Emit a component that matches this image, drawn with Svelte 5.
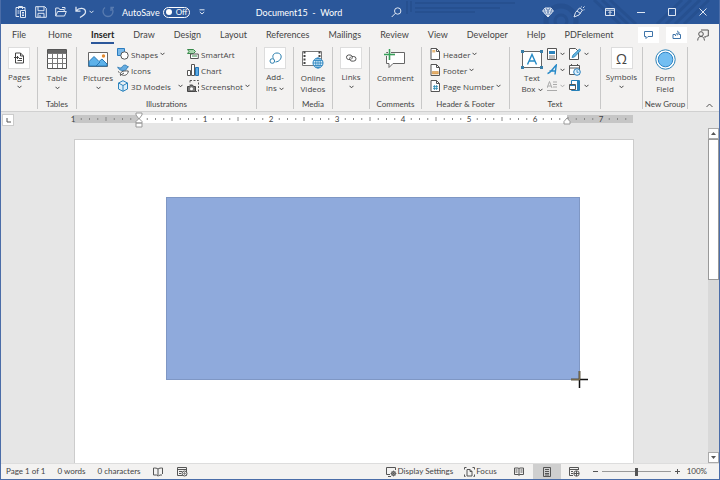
<script>
	let autosave = $state(false);
	let zoom = $state(50);
	let activeTab = $state('Insert');

	const tabs = ['File', 'Home', 'Insert', 'Draw', 'Design', 'Layout', 'References', 'Mailings', 'Review', 'View', 'Developer', 'Help', 'PDFelement'];

	// ruler: 66px per inch, eight marks per inch
	const inch = 66;
	const origin = 66;
	const marks = [];
	for (let i = -7; i < 60; i++) {
		if (i % 8 !== 0) marks.push({ x: origin + (i * inch) / 8, half: i % 4 === 0 });
	}
	const numbers = [1, 2, 3, 4, 5, 6, 7];
</script>

{#snippet chevron()}
	<svg class="chevron" width="5" height="4" viewBox="0 0 5 4"><path d="M.5 .8 2.5 2.8 4.5 .8" /></svg>
{/snippet}

{#snippet docIcon(kind)}
	<svg width="11" height="12" viewBox="0 0 11 12">
		<path d="M1 .5h5.5l3 3v8H1z" fill="#fff" stroke="#555" />
		<path d="M6.5 .5v3h3" fill="none" stroke="#555" />
		{#if kind === 'header'}
			<path d="M2.3 2h3v2.5h-3z" fill="#e8b878" />
		{:else if kind === 'footer'}
			<path d="M2.3 7.5h6v2.5h-6z" fill="#e8b06a" stroke="#c58432" stroke-width=".5" />
		{:else}
			<path d="M3 5.5h5v4H3z" fill="#d6ecf6" />
			<path d="M4.5 5v5M6.5 5v5M3 6.5h5M3 8.5h5" stroke="#2b88b0" stroke-width=".7" />
		{/if}
	</svg>
{/snippet}

<div class="window">
	<header class="titlebar">
		<svg class="pattern" width="330" height="24" viewBox="0 0 330 24" aria-hidden="true">
			<g fill="none" stroke="#234b88" opacity=".55">
				<path d="M18 1v13M22 1v11M26 3h100M26 8h85M26 12h60" stroke-width="2" />
				<circle cx="172" cy="21" r="15" stroke-width="5" />
				<circle cx="172" cy="21" r="6" stroke-width="3" />
				<path d="M205 0l26 24M213 0l26 24M221 0l26 24" stroke-width="3" />
				<path d="M268 24l25-24M277 24l25-24M286 24l25-24M295 24l25-24" stroke-width="3" />
			</g>
		</svg>
		<div class="quick">
			<button aria-label="Paste"><svg width="12" height="12" viewBox="0 0 12 12"><path d="M4 10.5H1v-9h9V4M3.5 3V.5h4V3M5.5 4.5h5v7h-5zM7 6.500h2M7 8h2M7 9.500h2M2.500 5h2M2.500 7h2" /></svg></button>
			<button aria-label="Save"><svg width="12" height="12" viewBox="0 0 12 12"><path d="M.7 .7h9l1.600 1.600v9H.7zM3 .7v4h6v-4M3 11.300v-4h6v4M5 9v2" /></svg></button>
			<button aria-label="Open"><svg width="12" height="12" viewBox="0 0 12 12"><path d="M.7 10V2h3l1 1.500h4.500v2M.7 10l2-4.500h8.600L9.500 10zM7 1.500h3v2" /></svg></button>
			<button class="undo" aria-label="Undo"><svg width="12" height="12" viewBox="0 0 12 12"><path d="M1 .7v4.500h4.500M1.200 5C4 1 10.500 1.500 10.500 6 10.500 8.500 8 9.500 5 11.500" stroke-width="1.300" /></svg>{@render chevron()}</button>
			<button class="faded" aria-label="Redo"><svg width="12" height="12" viewBox="0 0 12 12"><path d="M3 1.500a5 5 0 1 0 6 0M9 5V1.500h3" stroke-width="1.300" /></svg></button>
			<label class="autosave">
				<span>AutoSave</span>
				<span class="switch">
					<input type="checkbox" bind:checked={autosave} />
					<span>{autosave ? 'On' : 'Off'}</span>
				</span>
			</label>
			<button class="customize" aria-label="Customize toolbar"><svg width="6" height="6" viewBox="0 0 6 6"><path d="M.5 .8h5M.8 3l2.200 2L5.200 3" /></svg></button>
		</div>
		<div class="title">Document15&nbsp; -&nbsp; Word</div>
		<button class="search" aria-label="Search"><svg width="11" height="11" viewBox="0 0 11 11"><circle cx="6.700" cy="4" r="3.200" /><path d="M4.400 6.300.7 10" /></svg></button>
		<div class="system">
			<button aria-label="Premium"><svg width="12" height="11" viewBox="0 0 12 11"><path d="M3 1h6l2.300 3L6 10 .7 4zM.7 4h10.600M3 1l1 3 2 6 2-6 1-3M4 4l2-3 2 3M2.300 6h7.400" /></svg></button>
			<button aria-label="Designer"><svg width="12" height="12" viewBox="0 0 12 12"><path d="M1 11l1.500-4.500L6.500 2l3 2-3.500 5zM4 5l3.500 2.500M8 1.500l.5-1M10 2l1.500-1.500M10.500 4l1-.3" /></svg></button>
			<button aria-label="Ribbon display options"><svg width="10" height="8" viewBox="0 0 10 8"><path d="M.5 .5h9v7h-9zM.5 2.200h9M5 7V3.500M3.500 5 5 3.500 6.500 5" /></svg></button>
			<button aria-label="Minimize"><svg width="8" height="8" viewBox="0 0 8 8"><path d="M0 4.500h8" /></svg></button>
			<button aria-label="Maximize"><svg width="8" height="8" viewBox="0 0 8 8"><path d="M.5 .5h7v7h-7z" /></svg></button>
			<button aria-label="Close"><svg width="8" height="8" viewBox="0 0 8 8"><path d="M.5 .5l7 7M7.500 .5l-7 7" /></svg></button>
		</div>
	</header>

	<nav class="tabs">
		{#each tabs as tab}
			<button class:active={tab === activeTab} onclick={() => (activeTab = tab)}>{tab}</button>
		{/each}
		<div class="tab-actions">
			<button class="boxed" aria-label="Comments"><svg width="9" height="8" viewBox="0 0 9 8"><path d="M.5 .5h8v5H4l-2 2v-2H.5z" /></svg></button>
			<button class="boxed" aria-label="Share"><svg width="10" height="9" viewBox="0 0 10 9"><path d="M3 4.500H1v4h7.500v-4H7M3.500 6c0-2 1-3 3-3M5 .8l2.500 2.200L5 5.200" /></svg></button>
			<button class="person" aria-label="Account"><svg width="12" height="12" viewBox="0 0 12 12"><path d="M4 1h7.300v6H9.500L8 8.500V7M.7 11.500C1 8.500 2 7.500 4 7.500s3 1 3.500 4" /><circle cx="4" cy="5" r="2.300" fill="#f3f2f1" /></svg></button>
		</div>
	</nav>

	<section class="ribbon">
		<div class="group pages">
			<button class="large">
				<span class="tile"><svg width="11" height="12" viewBox="0 0 11 12"><path d="M1.500 1h5l3 3v7h-8zM6.500 1v3h3M0 5.500h4.500M3 4l1.500 1.500L3 7M5 6.500h3M3.500 8.500H8" fill="none" stroke="#444" /></svg></span>
				<span>Pages</span>{@render chevron()}
			</button>
		</div>

		<div class="group tables">
			<button class="large">
				<span class="icon"><svg width="20" height="20" viewBox="0 0 20 20"><path d="M.5 .5h19v19H.5z" fill="#fff" stroke="#555" /><path d="M1 1h18v3.500H1z" fill="#666" /><path d="M.5 9.500h19M.5 14.500h19M5.500 4v15M10.500 4v15M15.500 4v15M.5 4.500h19" fill="none" stroke="#777" /></svg></span>
				<span>Table</span>{@render chevron()}
			</button>
			<h2>Tables</h2>
		</div>

		<div class="group illustrations">
			<div class="items">
				<button class="large">
					<span class="icon"><svg width="20" height="15" viewBox="0 0 20 15"><path d="M.5 .5h19v14H.5z" fill="#fff" stroke="#666" /><path d="M1 13V9.500l5-5 5 5 3-2.500 5 5v2H1z" fill="#5db1e9" stroke="#2678b8" /><path d="M8 14l4-4" stroke="#2678b8" /><circle cx="15.500" cy="4" r="1.700" fill="#e48b31" /></svg></span>
					<span>Pictures</span>{@render chevron()}
				</button>
				<div class="stack">
					<button class="small"><svg width="12" height="12" viewBox="0 0 12 12"><path d="M.5 .5h7v7h-7z" fill="#79b8e8" stroke="#2b7cbf" /><circle cx="7.500" cy="7.500" r="3.700" fill="#fff" stroke="#555" /></svg>Shapes {@render chevron()}</button>
					<button class="small"><svg width="12" height="12" viewBox="0 0 12 12"><path d="M5 3.500C5.500.8 9 .3 10 2.200l1.500.6-1.500 1C10 6 8 6.500 6 6.500 3 6.500 1.500 5.500.7 3c1.500 1 3 1.300 4.300.5z" fill="#65ace0" stroke="#2774ae" stroke-width=".8" /><path d="M3.500 11.300C2.500 8 6 6.500 11.300 7c-.3 4-4 5.500-7 3.500M3 11.500 7 9M1 7.500l1.500 1" fill="#fff" stroke="#555" /></svg>Icons</button>
					<button class="small models"><svg width="12" height="12" viewBox="0 0 12 12"><path d="M6 .7 10.500 3v6L6 11.300 1.500 9V3zM1.500 3 6 5.500 10.500 3M6 5.500v5.800" fill="#dceefa" stroke="#2b83bd" /></svg>3D Models <span class="push">{@render chevron()}</span></button>
				</div>
				<div class="stack">
					<button class="small"><svg width="12" height="12" viewBox="0 0 12 12"><path d="M.5 1.500h6l2 2-2 2h-6l1.500-2z" fill="#a7d5ae" stroke="#388a4b" /><path d="M3.500 6h7.800v4.500H3.500z" fill="#fff" stroke="#555" /><path d="M5 8h5" stroke="#388a4b" /></svg>SmartArt</button>
					<button class="small"><svg width="12" height="12" viewBox="0 0 12 12"><path d="M.5 6.500h3v5h-3z" fill="#fff" stroke="#555" /><path d="M4.500 .5h3v11h-3z" fill="#fff" stroke="#555" /><path d="M8.500 3.500h3v8h-3z" fill="#5aace8" stroke="#2474b5" /></svg>Chart</button>
					<button class="small"><svg width="12" height="12" viewBox="0 0 12 12"><path d="M3 .5h8.500v11H8.500M3 .5v4" fill="none" stroke="#555" stroke-dasharray="2 1.500" /><path d="M.5 6.500h2l1-1.500h2l1 1.500h2v5h-8z" fill="#777" stroke="#444" /><circle cx="4.500" cy="8.800" r="1.500" fill="#fff" /></svg>Screenshot {@render chevron()}</button>
				</div>
			</div>
			<h2>Illustrations</h2>
		</div>

		<div class="group addins">
			<button class="large">
				<span class="tile"><svg width="13" height="13" viewBox="0 0 13 13"><path d="M4.500 6.500C3 4.500 4 1 8 1s5 3.500 3.500 6-3 2.500-5 3" fill="none" stroke="#2b7fae" /><circle cx="3.300" cy="9" r="2.300" fill="none" stroke="#2b7fae" /></svg></span>
				<span>Add-<br />ins {@render chevron()}</span>
			</button>
		</div>

		<div class="group media">
			<button class="large">
				<span class="icon"><svg width="22" height="20" viewBox="0 0 22 20"><path d="M.5 2.500h19v14H.5z" fill="#fff" stroke="#777" /><path d="M2.500 2.500v14M17.500 2.500v14" stroke="#444" stroke-width="2" stroke-dasharray="2 1.500" /><circle cx="16" cy="14" r="5" fill="#d8effb" stroke="#2680bd" /><path d="M11 14h10M16 9v10M12 11.500h8M12 16.500h8" stroke="#2680bd" stroke-width=".8" /><ellipse cx="16" cy="14" rx="2.300" ry="5" fill="none" stroke="#2680bd" stroke-width=".8" /></svg></span>
				<span>Online<br />Videos</span>
			</button>
			<h2>Media</h2>
		</div>

		<div class="group links">
			<button class="large">
				<span class="tile"><svg width="12" height="8" viewBox="0 0 12 8"><path d="M5 5.500H3.300A2.300 2.300 0 0 1 3.300 1H5c3 0 3 4 .5 4.500M7 2.500h1.700a2.300 2.300 0 0 1 0 4.600H7c-3 0-3-4-.5-4.500" fill="none" stroke="#555" /></svg></span>
				<span>Links</span>{@render chevron()}
			</button>
		</div>

		<div class="group comments">
			<button class="large">
				<span class="icon"><svg width="22" height="20" viewBox="0 0 22 20"><path d="M2.500 3.500h18v11H9l-4 4v-4H2.500z" fill="#fff" stroke="#666" /><path d="M5.500 0v11M0 5.500h11" stroke="#f3f2f1" stroke-width="3" /><path d="M5.500 0v11M0 5.500h11" stroke="#36a15a" stroke-width="1.500" /></svg></span>
				<span>Comment</span>
			</button>
			<h2>Comments</h2>
		</div>

		<div class="group header-footer">
			<div class="items">
				<div class="stack">
					<button class="small">{@render docIcon('header')}Header {@render chevron()}</button>
					<button class="small">{@render docIcon('footer')}Footer {@render chevron()}</button>
					<button class="small">{@render docIcon('number')}Page Number {@render chevron()}</button>
				</div>
			</div>
			<h2>Header &amp; Footer</h2>
		</div>

		<div class="group text">
			<div class="items">
				<button class="large">
					<span class="icon"><svg width="22" height="19" viewBox="0 0 22 19"><path d="M1.500 1.500h19v16h-19z" fill="#fff" stroke="#666" /><path d="M0 0h3v3H0zM19 0h3v3h-3zM0 16h3v3H0zM19 16h3v3h-3z" fill="#397fa9" /><path d="M6.500 14.500 11 4.500l4.500 10M8 11h6" fill="none" stroke="#268ac5" stroke-width="1.400" /></svg></span>
					<span>Text<br />Box {@render chevron()}</span>
				</button>
				<div class="stack">
					<button class="small only" aria-label="Quick Parts"><svg width="10" height="12" viewBox="0 0 10 12"><path d="M.5 .5h9v11h-9z" fill="#fff" stroke="#555" /><path d="M2 3h6v3H2z" fill="#2b83bd" /><path d="M2 8h6M2 10h6" stroke="#777" /></svg>{@render chevron()}</button>
					<button class="small only" aria-label="WordArt"><svg width="10" height="12" viewBox="0 0 10 12"><path d="M.5 9.500C4 9 6 4 9.300 1L8 10.500M2.500 7h6" fill="none" stroke="#2689c8" stroke-width="1.400" /></svg>{@render chevron()}</button>
					<button class="small only disabled" aria-label="Drop Cap" disabled><svg width="10" height="12" viewBox="0 0 10 12"><path d="M0 8 2.500 1.500 5 8M1 6h3M6 2h4M6 4.500h4M6 7h4M0 10.500h10" fill="none" stroke="#aaa" /></svg>{@render chevron()}</button>
				</div>
				<div class="stack">
					<button class="small only" aria-label="Signature Line"><svg width="12" height="12" viewBox="0 0 12 12"><path d="M.5 .5h6l3 3v8h-9z" fill="#fff" stroke="#555" /><path d="M3 9.500 4 7l6.500-6 1.300 1.300L5.500 9z" fill="#63b4e2" stroke="#287fae" stroke-width=".8" /></svg>{@render chevron()}</button>
					<button class="small only" aria-label="Date and Time"><svg width="12" height="12" viewBox="0 0 12 12"><path d="M.5 1.500h10v9H.5zM.5 4h10M2.500 0v2M8.500 0v2" fill="#fff" stroke="#555" /><circle cx="8" cy="8" r="3.300" fill="#e1f2fc" stroke="#287fbd" /><path d="M8 6v2.300h1.700" fill="none" stroke="#287fbd" stroke-width=".8" /></svg></button>
					<button class="small only" aria-label="Object"><svg width="12" height="12" viewBox="0 0 12 12"><path d="M2.500 .5h8v10h-8z" fill="#fff" stroke="#2680b8" /><path d="M9 1v9" stroke="#2680b8" stroke-width="2" /><path d="M.5 4.500h6v5h-6z" fill="#fff" stroke="#555" /><path d="M1 5.500h5" stroke="#2680b8" /></svg>{@render chevron()}</button>
				</div>
			</div>
			<h2>Text</h2>
		</div>

		<div class="group symbols">
			<button class="large">
				<span class="tile omega">Ω</span>
				<span>Symbols</span>{@render chevron()}
			</button>
		</div>

		<div class="group new-group">
			<button class="large">
				<span class="icon"><svg width="21" height="21" viewBox="0 0 21 21"><circle cx="10.500" cy="10.500" r="9.700" fill="#fff" stroke="#2d83b8" /><circle cx="10.500" cy="10.500" r="7.300" fill="#72bef2" stroke="#2d83c4" /></svg></span>
				<span>Form<br />Field</span>
			</button>
			<h2>New Group</h2>
		</div>
		<button class="collapse" aria-label="Collapse the ribbon"><svg width="7" height="5" viewBox="0 0 7 5"><path d="M.5 4 3.500 1l3 3" /></svg></button>
	</section>

	<div class="editor">
		<div class="ruler-row">
			<button class="tab-stop" aria-label="Left tab"><svg width="5" height="5" viewBox="0 0 5 5"><path d="M1 0v4h4" /></svg></button>
			<svg class="ruler" width="560" height="16" viewBox="0 0 560 16">
				<path d="M0 3h560v8H0z" fill="#c6c6c6" />
				<path d="M66 3h428v8H66z" fill="#fff" />
				{#each marks as mark}
					<path d={mark.half ? `M${mark.x} 5v4` : `M${mark.x} 6v2`} stroke="#888" />
				{/each}
				<text x="0" y="10">1</text>
				{#each numbers as n}
					<text x={origin + n * inch} y="10">{n}</text>
				{/each}
				<path d="M63 1h6v2l-3 4-3-4zM63 11V9.500l3-3 3 3V11zM63 11h6v4h-6z" fill="#fff" stroke="#999" />
				<path d="M491 12V9.500l3-3.500 3 3.500V12z" fill="#fff" stroke="#999" />
			</svg>
		</div>
		<div class="workspace">
			<main class="page">
				<div class="shape">
					<svg class="cursor" width="17" height="17" viewBox="0 0 17 17"><path d="M8.500 0v17M0 8.500h17" stroke="#111" stroke-width="1.500" /><path d="M8.500 0v8.500H0" fill="none" stroke="#766848" stroke-width="1.500" /></svg>
				</div>
			</main>
		</div>
		<div class="scrollbar">
			<button aria-label="Scroll up"><svg width="5" height="3" viewBox="0 0 5 3"><path d="M0 3 2.500 0 5 3z" fill="#555" /></svg></button>
			<div class="track"><div class="thumb"></div></div>
			<button aria-label="Scroll down"><svg width="5" height="3" viewBox="0 0 5 3"><path d="M0 0l2.500 3L5 0z" fill="#555" /></svg></button>
		</div>
	</div>

	<footer class="status">
		<span>Page 1 of 1</span>
		<span>0 words</span>
		<span>0 characters</span>
		<button aria-label="Proofing"><svg width="10" height="10" viewBox="0 0 10 10"><path d="M5 2v7M5 2C4 1 2 1 .5 1v7h3L5 9M5 2c1-1 3-1 4.500-1v6M5.500 9l1.500-1h2" /></svg></button>
		<button class="macro" aria-label="Macro recording"><svg width="11" height="10" viewBox="0 0 11 10"><path d="M.5 .5h9v8h-9zM.5 2.500h9M2 4.500h3M2 6.500h2" /><circle cx="7.500" cy="6.500" r="2.500" fill="#f3f2f1" /><circle cx="7.500" cy="6.500" r=".7" /></svg></button>
		<div class="view-tools">
			<button class="display"><svg width="11" height="10" viewBox="0 0 11 10"><path d="M4 7.500H.5v-7h9V3M2 9.500h3" /><circle cx="7.500" cy="6.500" r="2" /><path d="M7.500 3.500v6M4.500 6.500h6M5.500 4.500l4 4M9.500 4.500l-4 4" stroke-width=".7" /></svg>Display Settings</button>
			<button class="focus"><svg width="11" height="10" viewBox="0 0 11 10"><path d="M3 2.500h3l2 2v4.500H3zM6 2.500v2h2M2.500 .5h-2v2M8.500 .5h2v2M.5 7.500v2h1M10.500 7.500v2h-1" /></svg>Focus</button>
			<button class="view" aria-label="Read mode"><svg width="10" height="9" viewBox="0 0 10 9"><path d="M5 1.500v7M.5 1H4l1 .5L6 1h3.500v6.500H6L5 8l-1-.5H.5zM1.500 3h2M1.500 5h2M6.500 3h2M6.500 5h2" /></svg></button>
			<button class="view selected" aria-label="Print layout"><svg width="8" height="10" viewBox="0 0 8 10"><path d="M.5 .5h7v9h-7zM2 2.500h4M2 4.500h4M2 6.500h4M2 8h4" /></svg></button>
			<button class="view" aria-label="Web layout"><svg width="11" height="10" viewBox="0 0 11 10"><path d="M4 8.500H.5v-8h9V3M.5 2.500h9M2 4.500h2M2 6.500h2" /><circle cx="7.500" cy="6.500" r="2.700" /><path d="M5 6.500h5M7.500 4v5" /></svg></button>
			<button class="step" aria-label="Zoom out"><svg width="7" height="7" viewBox="0 0 7 7"><path d="M1 3.500h5" /></svg></button>
			<input type="range" min="0" max="100" bind:value={zoom} aria-label="Zoom" />
			<button class="step" aria-label="Zoom in"><svg width="7" height="7" viewBox="0 0 7 7"><path d="M1 3.500h5M3.500 1v5" /></svg></button>
			<span class="percent">100%</span>
		</div>
	</footer>
</div>

<style>
	:global(body) {
		margin: 0;
	}

	.window {
		box-sizing: border-box;
		height: 100vh;
		display: flex;
		flex-direction: column;
		overflow: hidden;
		border: 1px solid #4b6da8;
		border-top: 0;
		background: #e6e6e6;
		color: #444;
		font-family: Lato, "Open Sans", sans-serif;
		font-size: 9px;
		line-height: 11px;
	}

	button {
		display: flex;
		align-items: center;
		justify-content: center;
		padding: 0;
		border: 0;
		background: none;
		color: inherit;
		font: inherit;
		white-space: nowrap;
	}

	svg {
		flex: none;
	}

	.chevron {
		fill: none;
		stroke: currentColor;
	}

	.titlebar {
		position: relative;
		flex: none;
		height: 24px;
		display: grid;
		grid-template-columns: 1fr auto 1fr;
		align-items: center;
		background: #2b579a;
		color: #fff;
	}

	.titlebar button > svg {
		fill: none;
		stroke: #dfe7f3;
	}

	.pattern {
		position: absolute;
		top: 0;
		right: 0;
	}

	.quick {
		display: flex;
		align-items: center;
		gap: 8px;
		padding-left: 14px;
	}

	.quick .undo {
		gap: 2px;
	}

	.titlebar .faded {
		opacity: 0.25;
	}

	.autosave {
		display: flex;
		align-items: center;
		gap: 3px;
	}

	.switch {
		box-sizing: border-box;
		display: flex;
		align-items: center;
		gap: 4px;
		width: 27px;
		height: 11px;
		padding: 0 2px;
		border: 1px solid #fff;
		border-radius: 6px;
		font-size: 8px;
		line-height: 9px;
	}

	.switch input {
		flex: none;
		appearance: none;
		width: 6px;
		height: 6px;
		margin: 0;
		border-radius: 3px;
		background: #fff;
	}

	.customize {
		margin-left: 1px;
	}

	.title {
		margin-right: 122px;
	}

	.search {
		position: absolute;
		left: 54%;
		margin-left: 2px;
	}

	.system {
		position: relative;
		display: flex;
		justify-content: flex-end;
		padding-right: 1px;
	}

	.system button {
		width: 31px;
		height: 24px;
	}

	.tabs {
		flex: none;
		height: 21px;
		display: flex;
		align-items: center;
		gap: 19px;
		padding-left: 11px;
		background: #f3f2f1;
	}

	.tabs > button {
		box-sizing: border-box;
		height: 19px;
		border-bottom: 2px solid transparent;
		border-top: 2px solid transparent;
	}

	.tabs > button:first-child {
		margin-right: 3px;
	}

	.tabs > button.active {
		border-bottom-color: #2b579a;
		color: #222;
		font-weight: 700;
	}

	.tab-actions {
		display: flex;
		align-items: center;
		gap: 7px;
		margin-left: auto;
		padding-right: 10px;
	}

	.boxed {
		width: 21px;
		height: 16px;
		background: #fff;
	}

	.person {
		margin-left: 3px;
	}

	.tab-actions svg {
		fill: none;
		stroke: #3d73a8;
	}

	.tab-actions .person svg {
		stroke: #555;
	}

	.ribbon {
		flex: none;
		display: flex;
		height: 66px;
		background: #f3f2f1;
		border-bottom: 1px solid #d0d0d0;
		font-family: "Open Sans", sans-serif;
		font-size: 8px;
	}

	.group {
		box-sizing: border-box;
		flex: none;
		display: flex;
		flex-direction: column;
		align-items: center;
		justify-content: space-between;
		height: 62px;
		margin-top: 2px;
		border-right: 1px solid #c8c8c8;
	}

	h2 {
		margin: 0;
		font-family: Lato, sans-serif;
		font-size: 8px;
		font-weight: 400;
		line-height: 9px;
		white-space: nowrap;
	}

	.pages { width: 37px; }
	.tables { width: 39px; }
	.illustrations { width: 180px; }
	.addins { width: 37px; }
	.media { width: 39px; }
	.links { width: 37px; }
	.comments { width: 52px; }
	.header-footer { width: 88px; }
	.text { width: 91px; }
	.symbols { width: 42px; }
	.new-group { width: 45px; }

	.items {
		display: flex;
		gap: 4px;
	}

	.large {
		flex-direction: column;
		justify-content: flex-start;
	}

	.large > .chevron {
		margin-top: 3px;
	}

	.icon,
	.tile {
		box-sizing: border-box;
		display: flex;
		align-items: center;
		justify-content: center;
		width: 22px;
		height: 22px;
		margin-bottom: 2px;
	}

	.icon {
		margin-top: 1px;
	}

	.tile {
		border: 1px solid #ddd;
		background: #fff;
	}

	.omega {
		font-size: 14px;
	}

	.stack {
		display: flex;
		flex-direction: column;
		align-items: flex-start;
		margin-top: -1px;
	}

	.small {
		height: 16px;
		gap: 2px;
	}

	.models {
		width: 66px;
		justify-content: flex-start;
	}

	.push {
		display: flex;
		margin-left: auto;
	}

	.only {
		gap: 3px;
	}

	.disabled {
		color: #aaa;
	}

	.collapse {
		align-self: flex-end;
		margin: 0 6px 3px auto;
	}

	.collapse svg,
	.tab-stop svg {
		fill: none;
		stroke: #555;
	}

	.editor {
		flex: 1;
		min-height: 0;
		display: grid;
		grid-template: 16px 1fr / 1fr 11px;
	}

	.ruler-row {
		display: flex;
		padding-right: 16px;
	}

	.tab-stop {
		width: 12px;
		height: 12px;
		margin: 2px 0 0 1px;
		border: 1px solid #ccc;
		background: #fff;
	}

	.ruler {
		margin: 0 auto;
		overflow: visible;
		font-size: 8px;
		fill: #444;
		text-anchor: middle;
	}

	.workspace {
		grid-row: 2;
		display: flex;
		justify-content: center;
		padding: 11px 2px 0 0;
		overflow: hidden;
	}

	.page {
		box-sizing: border-box;
		width: 560px;
		padding: 57px 53px 0 91px;
		border: 1px solid #ccc;
		border-bottom: 0;
		background: #fff;
	}

	.shape {
		box-sizing: border-box;
		position: relative;
		height: 183px;
		border: 1px solid #7f97c4;
		background: #8faadc;
	}

	.cursor {
		position: absolute;
		right: -9px;
		bottom: -9px;
	}

	.scrollbar {
		grid-area: 2 / 2;
		display: flex;
		flex-direction: column;
		background: #d9d9d9;
	}

	.scrollbar button {
		height: 11px;
		border: 1px solid #aaa;
		background: #fff;
	}

	.track {
		flex: 1;
	}

	.thumb {
		box-sizing: border-box;
		height: 45%;
		border: 1px solid #999;
		background: #fff;
	}

	.status {
		flex: none;
		height: 15px;
		display: flex;
		align-items: center;
		gap: 12px;
		padding-left: 5px;
		border-top: 1px solid #ddd;
		background: #f3f2f1;
		font-size: 8px;
	}

	.status svg {
		fill: none;
		stroke: #555;
	}

	.status .macro {
		margin-left: 2px;
	}

	.view-tools {
		display: flex;
		align-items: center;
		height: 100%;
		margin-left: auto;
		padding-right: 12px;
	}

	.display,
	.focus {
		gap: 1px;
	}

	.display {
		margin-right: 11px;
	}

	.focus {
		margin-right: 8px;
	}

	.view {
		width: 28px;
		height: 100%;
	}

	.selected {
		background: #cfcfcf;
	}

	.step {
		width: 13px;
	}

	input[type="range"] {
		appearance: none;
		width: 69px;
		height: 9px;
		margin: 0;
		background: linear-gradient(#999, #999) center / 100% 1px no-repeat;
	}

	input[type="range"]::-webkit-slider-thumb {
		appearance: none;
		width: 3px;
		height: 8px;
		background: #555;
	}

	.percent {
		margin-left: 3px;
	}
</style>
